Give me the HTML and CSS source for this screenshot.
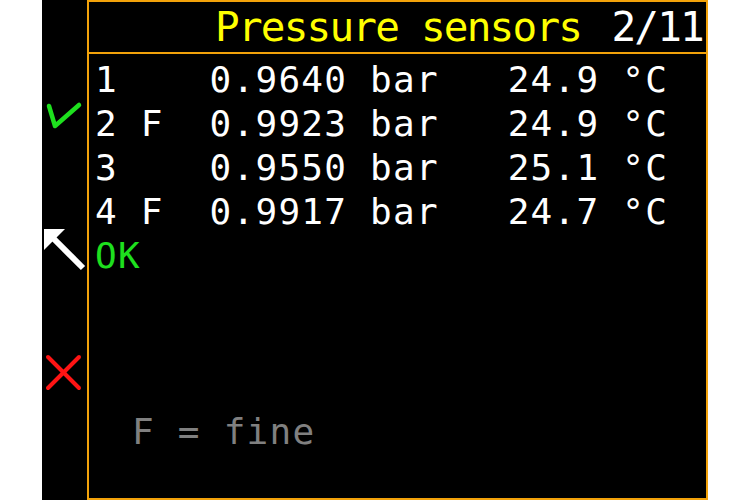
FILE: index.html
```html
<!DOCTYPE html>
<html>
<head>
<meta charset="utf-8">
<link rel="stylesheet" href="styles.css">
</head>
<body>
<div class="screen">
  <div class="side">
    <svg class="ico ico-check" width="45" height="32" viewBox="0 0 45 32">
      <polyline points="7,6 13,26 37,5" fill="none" stroke="#1ee01e" stroke-width="4.5" stroke-linecap="round" stroke-linejoin="round"/>
    </svg>
    <svg class="ico ico-arrow" width="45" height="48" viewBox="0 0 45 48">
      <polygon points="2,3 23,3 2,24" fill="#ffffff"/>
      <line x1="8" y1="9" x2="41" y2="42" stroke="#ffffff" stroke-width="6"/>
    </svg>
    <svg class="ico ico-x" width="45" height="40" viewBox="0 0 45 40">
      <line x1="6" y1="4" x2="37" y2="35" stroke="#ff1414" stroke-width="4" stroke-linecap="round"/>
      <line x1="37" y1="4" x2="6" y2="35" stroke="#ff1414" stroke-width="4" stroke-linecap="round"/>
    </svg>
  </div>
  <div class="frame">
    <div class="header">
      <span class="title">Pressure sensors</span>
      <span class="page">2/11</span>
    </div>
    <div class="content">
      <div class="row">1    0.9640 bar   24.9 °C</div>
      <div class="row">2 F  0.9923 bar   24.9 °C</div>
      <div class="row">3    0.9550 bar   25.1 °C</div>
      <div class="row">4 F  0.9917 bar   24.7 °C</div>
      <div class="row ok">OK</div>
      <div class="row note">F = fine</div>
    </div>
  </div>
</div>
</body>
</html>
```
FILE: styles.css
```css
html, body {
  margin: 0;
  padding: 0;
  background: #ffffff;
}
.screen {
  margin-left: 42px;
  width: 666px;
  height: 500px;
  background: #000000;
  display: flex;
}
.side {
  width: 45px;
  flex: none;
  display: flex;
  flex-direction: column;
  padding-top: 100px;
  box-sizing: border-box;
}
.ico { display: block; flex: none; }
.ico-arrow { margin-top: 94px; }
.ico-x { margin-top: 79px; }
.frame {
  width: 621px;
  height: 500px;
  box-sizing: border-box;
  border: 2px solid #f2a20a;
  display: flex;
  flex-direction: column;
  font-family: "DejaVu Sans Mono", monospace;
  color: #ffffff;
}
.header {
  height: 50px;
  border-bottom: 2px solid #f2a20a;
  display: flex;
  justify-content: space-between;
  font-size: 41px;
  line-height: 50px;
  letter-spacing: -1.8px;
  padding: 0 3px 0 126px;
}
.title { color: #ffff00; }
.page { color: #ffffff; }
.content {
  padding: 4px 0 0 6px;
}
.row {
  font-size: 36px;
  line-height: 44px;
  height: 44px;
  letter-spacing: 1.25px;
  white-space: pre;
}
.ok { color: #1ee01e; }
.note {
  color: #808080;
  margin-top: 132px;
  padding-left: 37px;
}
```
